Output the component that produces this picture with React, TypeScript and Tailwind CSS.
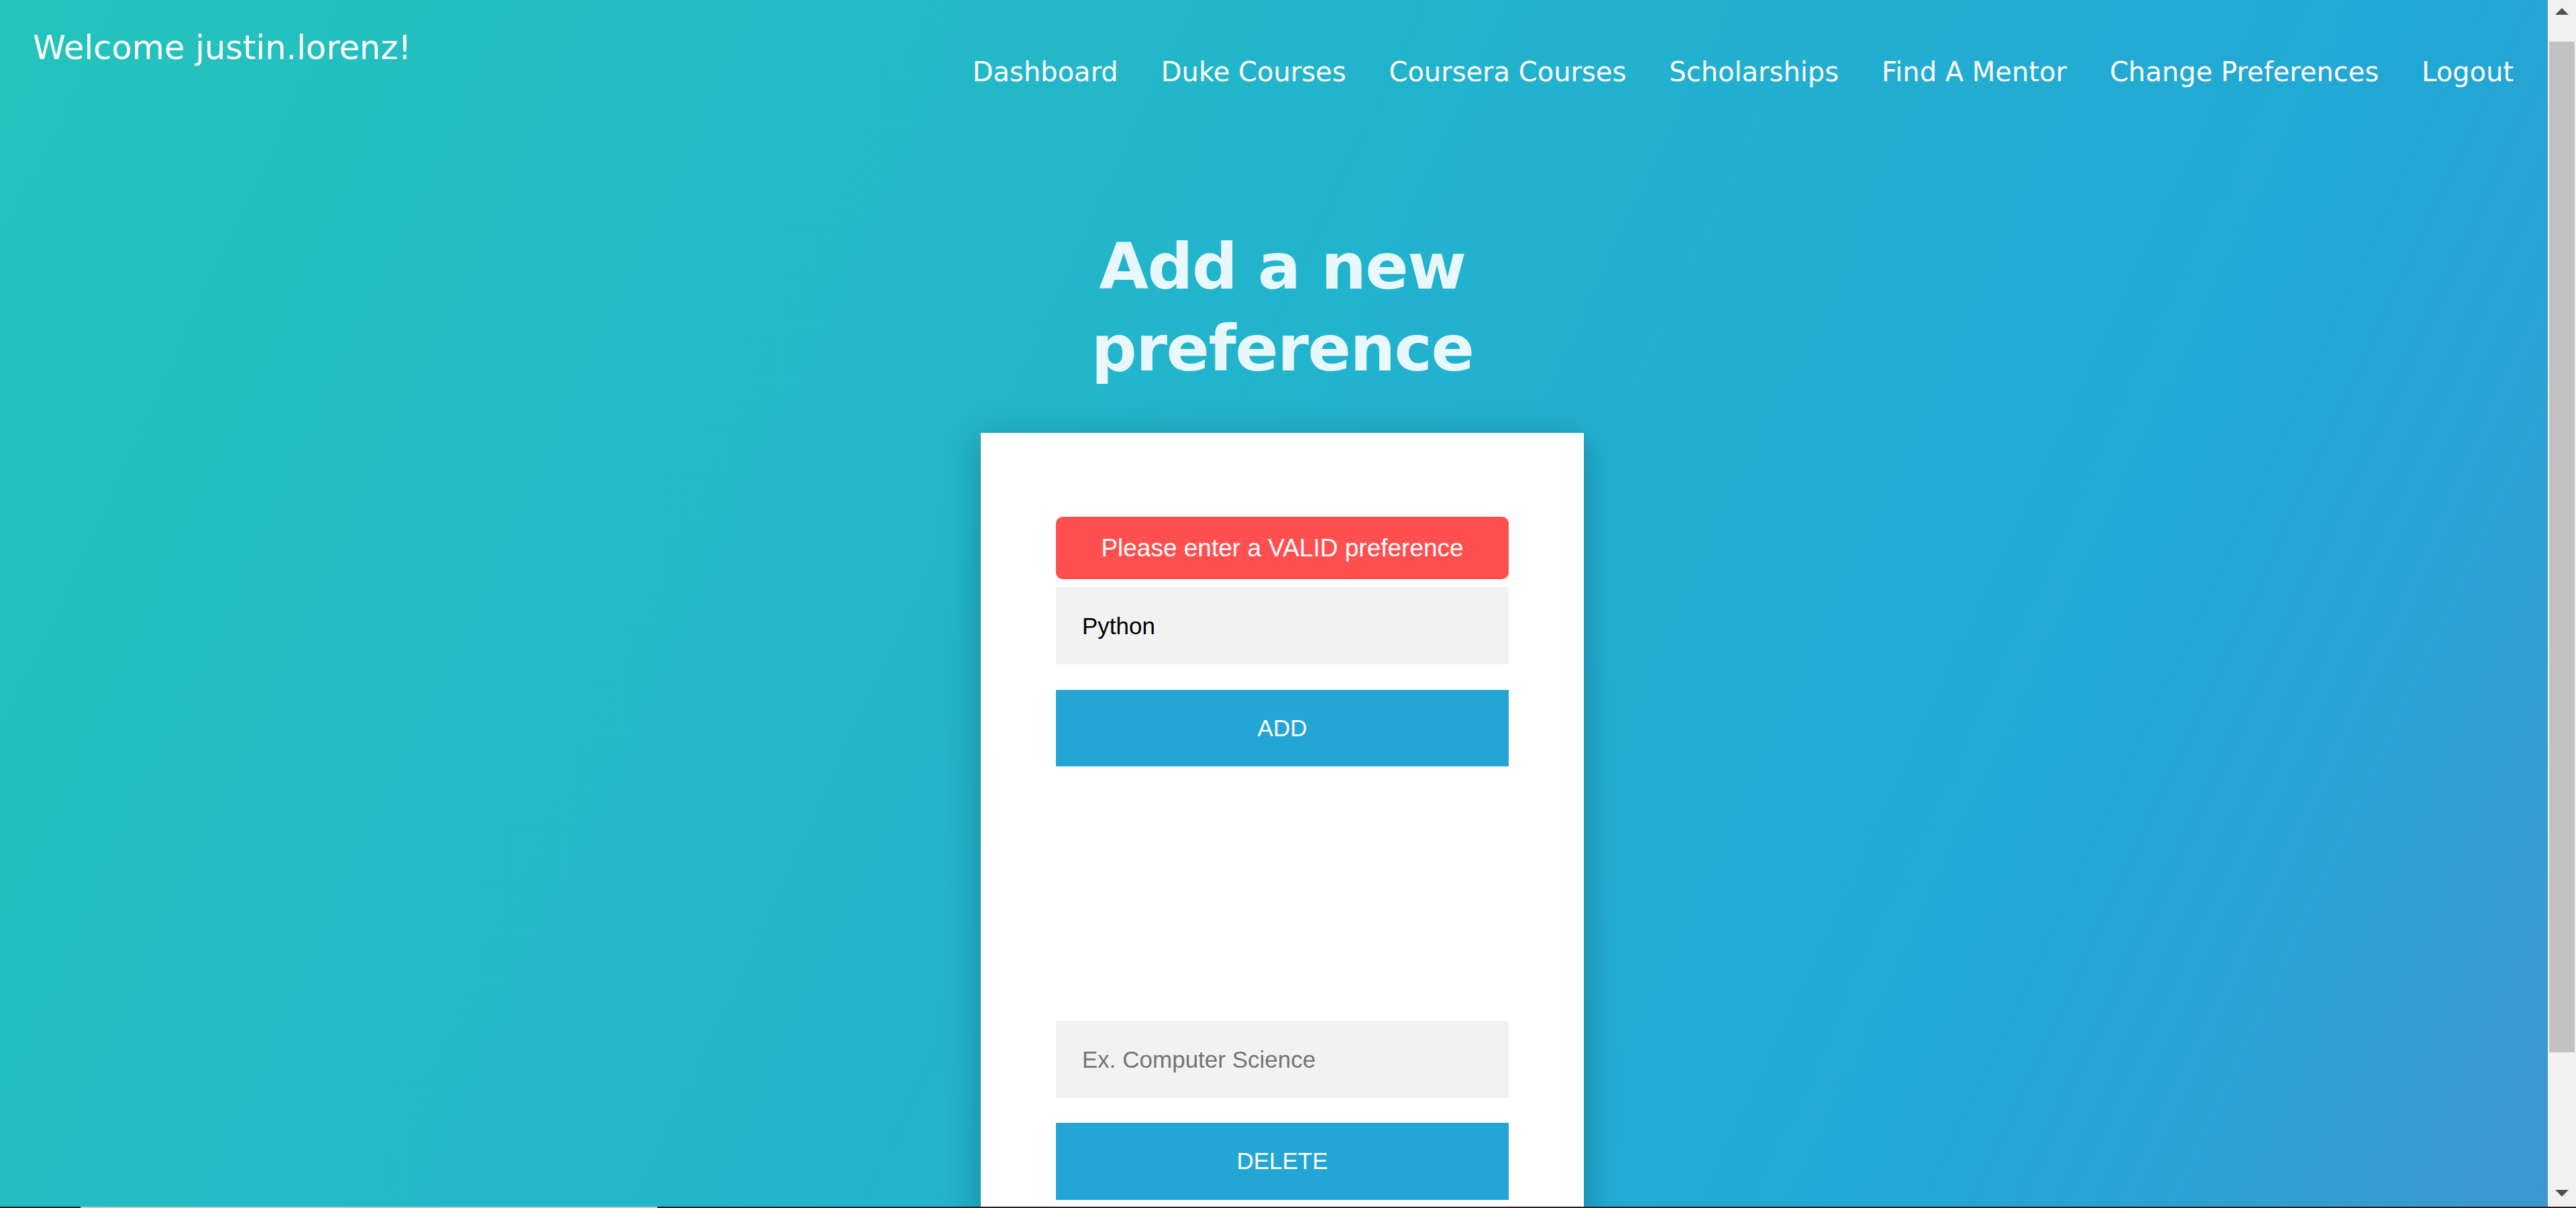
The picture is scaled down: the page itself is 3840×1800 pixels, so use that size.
import React from "react";

const NAV = [
  "Dashboard",
  "Duke Courses",
  "Coursera Courses",
  "Scholarships",
  "Find A Mentor",
  "Change Preferences",
  "Logout",
];

export default function App() {
  return (
    <div className="flex h-[1800px] w-full flex-col overflow-hidden">
      <div className="flex h-[1798px] w-full">
        <main className="relative flex min-w-0 flex-1 flex-col overflow-hidden bg-[linear-gradient(115deg,#24c4bc_0%,#22b2ce_50%,#22a7d5_80%,#3c98cf_100%)] font-['DejaVu_Sans',sans-serif]">
          <header className="flex items-start justify-between pl-[49px] pr-[51px]">
            <div className="mt-[41px] whitespace-nowrap text-[49.5px] leading-[60px] text-white">
              Welcome justin.lorenz!
            </div>
            <nav className="mt-[83px] flex gap-[64px] text-[40px] leading-[48px] text-white">
              {NAV.map((n) => (
                <a key={n} className="whitespace-nowrap">
                  {n}
                </a>
              ))}
            </nav>
          </header>
          <section className="flex flex-col items-center pl-[25px]">
            <h1 className="mt-[205px] w-[899px] text-center text-[95px] font-bold leading-[122px] tracking-[-1.5px] text-[#e9f8fc]">
              Add a new preference
            </h1>
            <div className="mt-[65px] w-[899px] shrink-0 bg-white px-[112px] pt-[125px] pb-[60px] font-['Liberation_Sans',Arial,sans-serif] shadow-[0_10px_50px_rgba(0,0,0,0.25)]">
              <div className="flex h-[93px] items-center justify-center rounded-[10px] bg-[#ff4f4f] text-[37px] text-white">
                Please enter a VALID preference
              </div>
              <input
                className="mt-[12px] block h-[115px] w-full bg-[#f2f2f2] pl-[39px] text-[35px] text-black outline-none"
                defaultValue="Python"
              />
              <button className="mt-[38px] block h-[114px] w-full bg-[#23a6d5] text-[35px] text-white">ADD</button>
              <div className="h-[379px]" />
              <input
                className="block h-[115px] w-full bg-[#f2f2f2] pl-[39px] text-[35px] text-black outline-none placeholder:text-[#757575]"
                placeholder="Ex. Computer Science"
              />
              <button className="mt-[37px] block h-[115px] w-full bg-[#23a6d5] text-[35px] text-white">DELETE</button>
            </div>
          </section>
        </main>
        <div className="flex w-[42px] shrink-0 flex-col bg-[#f1f1f1]">
          <div className="flex h-[62px] shrink-0 justify-center pt-[12px]">
            <svg width="20" height="10" viewBox="0 0 20 10">
              <path d="M10 0 L20 10 L0 10 Z" fill="#505050" />
            </svg>
          </div>
          <div className="mx-[2px] h-[1506px] shrink-0 bg-[#c1c1c1]" />
          <div className="flex flex-1 items-end justify-center pb-[15px]">
            <svg width="20" height="10" viewBox="0 0 20 10">
              <path d="M0 0 L20 0 L10 10 Z" fill="#505050" />
            </svg>
          </div>
        </div>
      </div>
      <div className="flex h-[2px] w-full">
        <div className="w-[120px] bg-[#1e1e1e]" />
        <div className="w-[860px] bg-[#c8c8c8]" />
        <div className="flex-1 bg-[#2e1d20]" />
      </div>
    </div>
  );
}
